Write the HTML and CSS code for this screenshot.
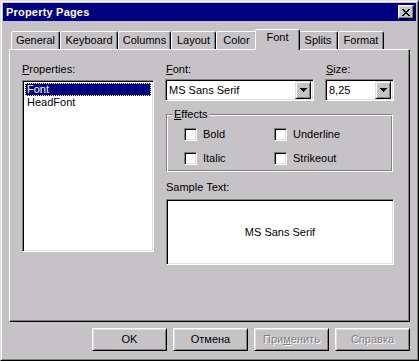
FILE: index.html
```html
<!DOCTYPE html>
<html>
<head>
<meta charset="utf-8">
<title>Property Pages</title>
<link rel="stylesheet" href="styles.css">
</head>
<body>
<div class="window">
  <div class="frame">
    <div class="titlebar">
      <span class="title">Property Pages</span>
      <div class="close">
        <svg width="8" height="7" viewBox="0 0 8 7" shape-rendering="crispEdges"><path fill="#000" d="M0 0h2v1H0zM6 0h2v1H6zM1 1h2v1H1zM5 1h2v1H5zM2 2h4v1H2zM3 3h2v1H3zM2 4h4v1H2zM1 5h2v1H1zM5 5h2v1H5zM0 6h2v1H0zM6 6h2v1H6z"/></svg>
      </div>
    </div>
    <div class="body">
      <div class="tabs">
        <div class="tab t-general">General</div>
        <div class="tab t-keyboard">Keyboard</div>
        <div class="tab t-columns">Columns</div>
        <div class="tab t-layout">Layout</div>
        <div class="tab t-color">Color</div>
        <div class="tab t-font sel">Font</div>
        <div class="tab t-splits">Splits</div>
        <div class="tab t-format">Format</div>
      </div>
      <div class="panel">
        <div class="col-left">
          <div class="label"><u>P</u>roperties:</div>
          <div class="listbox sunken">
            <div class="item selected">Font</div>
            <div class="item">HeadFont</div>
          </div>
        </div>
        <div class="col-right">
          <div class="row-fields">
            <div class="field field-font">
              <div class="label"><u>F</u>ont:</div>
              <div class="combo sunken">
                <span class="combo-text">MS Sans Serif</span>
                <span class="drop"><svg width="7" height="4" viewBox="0 0 7 4" shape-rendering="crispEdges"><path fill="#000" d="M0 0h7v1H0zM1 1h5v1H1zM2 2h3v1H2zM3 3h1v1H3z"/></svg></span>
              </div>
            </div>
            <div class="field field-size">
              <div class="label"><u>S</u>ize:</div>
              <div class="combo sunken">
                <span class="combo-text">8,25</span>
                <span class="drop"><svg width="7" height="4" viewBox="0 0 7 4" shape-rendering="crispEdges"><path fill="#000" d="M0 0h7v1H0zM1 1h5v1H1zM2 2h3v1H2zM3 3h1v1H3z"/></svg></span>
              </div>
            </div>
          </div>
          <div class="group">
            <span class="legend"><u>E</u>ffects</span>
            <label class="check"><span class="box sunken"></span><span>Bold</span></label>
            <label class="check"><span class="box sunken"></span><span>Underline</span></label>
            <label class="check"><span class="box sunken"></span><span>Italic</span></label>
            <label class="check"><span class="box sunken"></span><span>Strikeout</span></label>
          </div>
          <div class="label sample-label">Sample Text:</div>
          <div class="sample sunken">MS Sans Serif</div>
        </div>
      </div>
      <div class="buttons">
        <div class="btn">OK</div>
        <div class="btn">Отмена</div>
        <div class="btn disabled">При<u>м</u>енить</div>
        <div class="btn disabled">Справка</div>
      </div>
    </div>
  </div>
</div>
</body>
</html>
```

FILE: styles.css
```css
html, body {
  margin: 0;
  padding: 0;
  background: #c6c3c6;
}
body {
  font-family: "Liberation Sans", Arial, sans-serif;
  font-size: 11px;
  color: #000;
}
u { text-decoration: underline; text-underline-offset: 1px; }

.window {
  width: 419px;
  height: 361px;
  box-sizing: border-box;
  border: 1px solid;
  border-color: #dfdfdf #000 #000 #dfdfdf;
  background: #c6c3c6;
}
.frame {
  height: 100%;
  box-sizing: border-box;
  border: 1px solid;
  border-color: #fff #808080 #808080 #fff;
  padding: 1px;
  display: flex;
  flex-direction: column;
}
.titlebar {
  height: 18px;
  flex: none;
  background: #000080;
  display: flex;
  align-items: center;
  justify-content: space-between;
  padding: 0 2px 0 3px;
}
.title {
  color: #fff;
  font-weight: bold;
  font-size: 11px;
  letter-spacing: 0.2px;
}
.close {
  width: 16px;
  height: 14px;
  box-sizing: border-box;
  border: 1px solid;
  border-color: #fff #000 #000 #fff;
  box-shadow: inset -1px -1px #808080, inset 1px 1px #dfdfdf;
  background: #c6c3c6;
  display: flex;
  align-items: center;
  justify-content: center;
}
.close svg { display: block; margin-left: -1px; }

.body {
  flex: 1;
  padding: 8px 6px 0 6px;
  display: flex;
  flex-direction: column;
}

/* Tabs */
.tabs {
  height: 20px;
  display: flex;
  align-items: flex-end;
  padding-left: 2px;
  position: relative;
  z-index: 1;
}
.tab {
  height: 18px;
  box-sizing: border-box;
  border: 1px solid;
  border-bottom: none;
  border-color: #fff #000 transparent #fff;
  border-radius: 2px 3px 0 0;
  box-shadow: inset -1px 0 #808080;
  padding: 2px 0 0 0;
  line-height: 13px;
  text-align: center;
  background: #c6c3c6;
}
.t-general { width: 49px; }
.t-keyboard { width: 58px; }
.t-columns { width: 53px; }
.t-layout { width: 45px; }
.t-color { width: 41px; }
.t-font { width: 41px; }
.t-splits { width: 40px; }
.t-format { width: 46px; }
.tab.sel {
  height: 21px;
  margin: 0 -2px -1px -2px;
  width: 45px;
  padding-top: 1px;
  position: relative;
  z-index: 2;
}

.panel {
  height: 273px;
  box-sizing: border-box;
  border: 1px solid;
  border-color: #fff #000 #000 #fff;
  box-shadow: inset -1px -1px #808080;
  padding: 13px 0 0 12px;
  display: flex;
  gap: 11px;
}

.label {
  height: 13px;
  line-height: 13px;
}

.sunken {
  box-sizing: border-box;
  border: 1px solid;
  border-color: #808080 #fff #fff #808080;
  box-shadow: inset 1px 1px #000, inset -1px -1px #dfdfdf;
  background: #fff;
}

.col-left { width: 132px; display: flex; flex-direction: column; }
.col-left .label { margin-bottom: 4px; }
.listbox {
  height: 172px;
  padding: 2px;
}
.item {
  height: 13px;
  line-height: 13px;
  padding-left: 2px;
  box-sizing: border-box;
}
.item.selected {
  background: #000080;
  color: #fff;
  outline: 1px dotted #ffffa0;
  outline-offset: -1px;
}

.col-right { width: 229px; display: flex; flex-direction: column; }
.row-fields { display: flex; gap: 11px; }
.field .label { margin-bottom: 3px; margin-left: 1px; }
.field-font { width: 149px; }
.field-size { width: 69px; }
.combo {
  height: 22px;
  display: flex;
  align-items: center;
  justify-content: space-between;
  padding: 2px;
}
.combo-text { padding-left: 1px; line-height: 13px; }
.drop {
  width: 16px;
  height: 18px;
  box-sizing: border-box;
  border: 1px solid;
  border-color: #dfdfdf #000 #000 #dfdfdf;
  box-shadow: inset 1px 1px #fff, inset -1px -1px #808080;
  background: #c6c3c6;
  display: flex;
  align-items: center;
  justify-content: center;
}
.drop svg { display: block; }

.group {
  position: relative;
  margin: 13px 0 0 1px;
  width: 227px;
  height: 58px;
  box-sizing: border-box;
  border: 1px solid;
  border-color: #808080 #fff #fff #808080;
  box-shadow: inset 1px 1px #fff, inset -1px -1px #808080;
  display: grid;
  grid-template-columns: 90px 90px;
  row-gap: 11px;
  align-content: start;
  padding: 13px 0 0 17px;
}
.legend {
  position: absolute;
  top: -7px;
  left: 6px;
  padding: 0 2px 0 1px;
  line-height: 13px;
  background: #c6c3c6;
}
.check {
  display: flex;
  align-items: center;
  gap: 6px;
  height: 13px;
  line-height: 13px;
}
.box {
  width: 13px;
  height: 13px;
  flex: none;
}

.sample-label { margin: 9px 0 5px 1px; }
.sample {
  margin-left: 1px;
  width: 228px;
  height: 66px;
  display: flex;
  align-items: center;
  justify-content: center;
}

.buttons {
  display: flex;
  justify-content: flex-end;
  gap: 6px;
  margin-top: 6px;
  padding-right: 0;
}
.btn {
  width: 75px;
  height: 23px;
  box-sizing: border-box;
  border: 1px solid;
  border-color: #fff #000 #000 #fff;
  box-shadow: inset 1px 1px #dfdfdf, inset -1px -1px #808080;
  display: flex;
  align-items: center;
  justify-content: center;
  line-height: 13px;
}
.btn.disabled {
  color: #808080;
  text-shadow: 1px 1px #fff;
}
```
